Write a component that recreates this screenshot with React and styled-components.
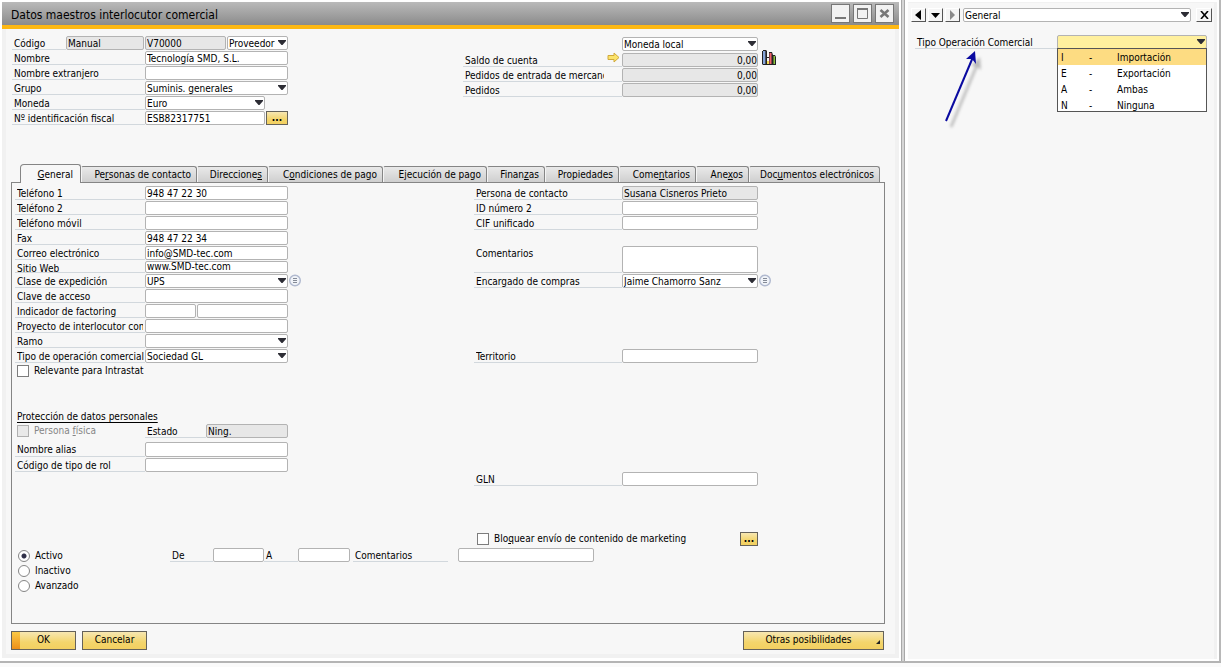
import React, { useId, useState } from "react";
import styled, { createGlobalStyle, css } from "styled-components";

const GlobalStyle = createGlobalStyle`
  *, *::before, *::after { box-sizing: border-box; }
  body { margin: 0; background: #fafafa; }
  body, button, input, select, textarea {
    font-family: "DejaVu Sans Condensed", "DejaVu Sans", Tahoma, sans-serif;
    font-size: 10px;
    color: #000;
  }
`;

/* ---------- shell ---------- */

const Desktop = styled.div`
  display: flex;
  align-items: stretch;
  min-height: calc(100vh - 5px);
  background: #fff;
  border-bottom: 2px solid #b4b4b4;
`;

const MainWindow = styled.main`
  flex: 1;
  min-width: 0;
  display: flex;
  flex-direction: column;
  padding: 2px 2px 3px 2px;
  border: solid #a8a8a8;
  border-width: 0 1px 0 0;
`;

const Divider = styled.div`
  width: 2px;
  flex: none;
  background: #d6d6d6;
`;

const SideWindow = styled.aside`
  width: 317px;
  flex: none;
  display: flex;
  padding: 2px 2px 2px 3px;
  border-left: 1px solid #a8a8a8;
  border-right: 2px solid #b8b8b8;
`;

const SideBody = styled.div`
  flex: 1;
  border-right: 3px solid #f1f1f1;
  border-top: 1px solid #f1f1f1;
  background: #f7f7f7;
  padding: 5px 0 0 3px;
`;

const TitleBar = styled.header`
  display: flex;
  align-items: center;
  height: 27px;
  padding: 0 5px 0 9px;
  background: linear-gradient(#bababa, #8b8b8b);
  border-bottom: 4px solid #fdb813;
  flex: none;
`;

const Title = styled.h1`
  flex: 1;
  margin: 0;
  font-size: 12px;
  font-weight: 400;
  line-height: 20px;
  padding-top: 2px;
`;

const WindowButtons = styled.div`
  display: flex;
  gap: 3px;
`;

const WindowButton = styled.button`
  width: 19px;
  height: 19px;
  padding: 0;
  display: grid;
  place-items: center;
  background: #f2f2f2;
  border: 1px solid #777;
`;

const WindowBody = styled.div`
  flex: 1;
  display: flex;
  flex-direction: column;
  background: #f7f7f7;
  border: solid #f1f1f1;
  border-width: 0 4px 4px 4px;
  padding: 7px 10px 4px 5px;
`;

/* ---------- fields ---------- */

const Row = styled.div`
  display: flex;
  align-items: flex-start;
  height: ${(p) => p.$h || 15}px;
`;

const Label = styled.label`
  width: ${(p) => p.$w || 130}px;
  height: ${(p) => p.$h || 14}px;
  flex: none;
  padding: 0 0 0 2px;
  line-height: 16px;
  white-space: nowrap;
  overflow: hidden;
  border-bottom: 1px solid #d2d8dd;
`;

const LabelClip = styled.span`
  display: block;
  max-width: ${(p) => (p.$clip ? `${p.$clip}px` : "none")};
  overflow: hidden;
`;

const box = css`
  display: block;
  margin: 0;
  width: ${(p) => p.$w || 143}px;
  height: ${(p) => p.$h || 14}px;
  padding: 0 1px;
  line-height: 12px;
  border: 1px solid #b3b3b3;
  border-radius: 2px;
  outline: 0;
  background: ${(p) => (p.$muted ? "#e7e7e7" : p.$active ? "#fff09e" : "#fff")};
  text-align: ${(p) => (p.$right ? "right" : "left")};
`;

const Input = styled.input`
  ${box}
  ${(p) => p.$right && "padding-right: 0;"}
`;

const Area = styled.textarea`
  ${box}
  resize: none;
`;

const SelectWrap = styled.span`
  position: relative;
  display: block;
  flex: none;
`;

const NativeSelect = styled.select`
  ${box}
  appearance: none;
  padding-top: 1px;
`;

const Caret = styled.svg`
  position: absolute;
  right: 2px;
  top: 4px;
  pointer-events: none;
`;

const Gap = styled.div`
  height: ${(p) => p.$h}px;
  flex: none;
`;

const GoldButton = styled.button`
  position: relative;
  width: ${(p) => p.$w}px;
  height: ${(p) => p.$h || 19}px;
  padding: 0 8px 2px;
  line-height: 12px;
  border: 1px solid #65625a;
  background: linear-gradient(#f7e7b2, #f3d56c 60%, #f3d060);
  ${(p) => p.$menu && "padding-right: 18px;"}
  ${(p) =>
    p.$primary &&
    css`
      background: linear-gradient(#fbc945, #ee8f18) 0 0 / 8px 100% no-repeat,
        linear-gradient(#f7e7b2, #f3d56c 60%, #f3d060);
    `}
`;

const DotsButton = styled(GoldButton)`
  width: ${(p) => p.$w}px;
  height: 14px;
  padding: 0 0 1px;
  font-weight: 700;
  line-height: 8px;
`;

const Corner = styled.svg`
  position: absolute;
  right: 3px;
  bottom: 5px;
`;

/* ---------- master header ---------- */

const MasterHeader = styled.section`
  display: flex;
  height: 127px;
`;

const HeaderLeft = styled.div`
  width: 452px;
  padding-left: 1px;
`;

const HeaderRight = styled.div`
  padding-top: 1px;
`;

const CurrencyRow = styled.div`
  padding: 0 0 1px 159px;
`;

const Spaced = styled.div`
  display: flex;
  gap: ${(p) => p.$gap}px;
`;

const LinkArrow = styled.svg`
  width: 13px;
  height: 12px;
  margin-left: -15px;
  margin-top: -1px;
  margin-right: 2px;
  flex: none;
`;

const ChartIcon = styled.svg`
  margin: -3px 0 0 4px;
  flex: none;
`;

const DetailIcon = styled.svg`
  margin-left: 1px;
  flex: none;
`;

/* ---------- tabs ---------- */

const TabList = styled.div`
  display: flex;
  align-items: flex-end;
  padding-left: 9px;
  height: 19px;
`;

const Tab = styled.button`
  width: ${(p) => p.$w}px;
  height: 16px;
  flex: none;
  padding: 1px 5px 0 0;
  text-align: right;
  white-space: nowrap;
  line-height: 12px;
  border: 1px solid #858585;
  border-left-color: #f4f4f4;
  border-bottom: 0;
  border-radius: 2px 3px 0 0;
  background: linear-gradient(#e9e9e9, #cfcfcf);

  &[aria-selected="true"] {
    height: 19px;
    padding-right: 7px;
    padding-top: 2px;
    margin-bottom: -1px;
    border-left-color: #858585;
    border-radius: 4px 3px 0 0;
    background: #f7f7f7;
    z-index: 1;
  }
`;

const Panel = styled.section`
  flex: 1;
  border: 1px solid #858585;
  padding: 3px 0 30px 3px;
`;

const Columns = styled.div`
  display: flex;
`;

const LeftColumn = styled.div`
  width: 459px;
  flex: none;
`;

const RightColumn = styled.div`
  flex: 1;
`;

const Check = styled.label`
  display: flex;
  align-items: center;
  gap: 5px;
  height: 14px;
  width: ${(p) => (p.$w ? `${p.$w}px` : "auto")};
  padding-left: ${(p) => p.$indent || 2}px;
  line-height: 14px;
  white-space: nowrap;
  color: ${(p) => (p.$off ? "#858585" : "#000")};

  input {
    appearance: none;
    width: 12px;
    height: 12px;
    margin: 0;
    flex: none;
    border: 1px solid #7d7d7d;
    background: ${(p) => (p.$off ? "#e9e9e9" : "#fff")};
    border-color: ${(p) => (p.$off ? "#b0b0b0" : "#7d7d7d")};
  }
`;

const Radio = styled.label`
  display: flex;
  align-items: center;
  gap: 5px;
  height: 15px;
  padding-left: 3px;
  line-height: 15px;

  input {
    appearance: none;
    width: 12px;
    height: 12px;
    margin: 0;
    border: 1px solid #858585;
    border-radius: 50%;
    background: #fff;
  }
  input:checked {
    background: radial-gradient(circle, #303048 0 2px, #fff 3px);
  }
`;

const GroupTitle = styled.h2`
  margin: 0 0 0 2px;
  font-size: 10px;
  font-weight: 400;
  line-height: 14px;
  height: 14px;
  text-decoration: underline;
  text-underline-offset: 2px;
`;

const StatusRow = styled.div`
  display: flex;
  align-items: flex-start;
`;

const RadioGroup = styled.div`
  width: 155px;
`;

const Footer = styled.footer`
  display: flex;
  gap: 6px;
  padding: 7px 1px 0 0;
`;

const Spacer = styled.span`
  flex: 1;
`;

/* ---------- side window ---------- */

const SideToolbar = styled.div`
  display: flex;
  align-items: flex-start;
  gap: 2px;
  height: 27px;
  padding-right: 2px;
`;

const NavButton = styled.button`
  width: ${(p) => p.$w || 15}px;
  height: 14px;
  flex: none;
  padding: 0;
  display: grid;
  place-items: center;
  background: #f5f5f5;
  border: solid #fff;
  border-width: 1px;
  border-right-color: #555;
  border-bottom-color: #555;
`;

const SideSelect = styled.div`
  flex: 1;
  margin: 0 3px 0 1px;

  select {
    width: 100%;
  }
`;

const SideField = styled.div`
  position: relative;
  display: flex;
  padding-left: 4px;
`;

const OptionList = styled.ul`
  position: absolute;
  left: 146px;
  top: 13px;
  width: 150px;
  margin: 0;
  padding: 0;
  list-style: none;
  background: #fff;
  border: 1px solid #555;
`;

const Option = styled.li`
  display: grid;
  grid-template-columns: 28px 28px 1fr;
  height: 16px;
  padding-left: 3px;
  line-height: 17px;
  background: ${(p) => (p.$on ? "#fddc82" : "#fff")};

  &:last-child { height: 14px; }
`;

const Pointer = styled.svg`
  position: absolute;
  left: 28px;
  top: 12px;
`;

/* ---------- building blocks ---------- */

function Select({ id, value, label, ...rest }) {
  return (
    <SelectWrap>
      <NativeSelect id={id} aria-label={label} defaultValue={value} {...rest}>
        <option>{value}</option>
      </NativeSelect>
      <Caret width="8" height="5" viewBox="0 0 8 5" aria-hidden="true">
        <path d="M0 0h8v1L4.5 5h-1L0 1z" fill="#2d2d35" />
      </Caret>
    </SelectWrap>
  );
}

function Field({ label, value = "", select, clip, labelWidth, h, after, before, ...rest }) {
  const id = useId();
  return (
    <Row $h={h}>
      <Label htmlFor={id} $w={labelWidth} $h={h ? h - 1 : 14}>
        <LabelClip $clip={clip}>{label}</LabelClip>
      </Label>
      {before}
      {select ? (
        <Select id={id} value={value} {...rest} />
      ) : (
        <Input id={id} defaultValue={value} readOnly={rest.$muted} $h={h ? h - 1 : 14} {...rest} />
      )}
      {after}
    </Row>
  );
}

const Detail = () => (
  <DetailIcon width="13" height="13" viewBox="0 0 13 13" aria-hidden="true">
    <circle cx="6" cy="6.5" r="5.300" fill="#f0f3f8" stroke="#b0b9cf" strokeWidth="1.400" />
    <path d="M4 4.500h4M4 6.500h4M4 8.500h4" stroke="#858b97" strokeWidth="1" />
  </DetailIcon>
);

const Arrow = () => (
  <LinkArrow viewBox="0 0 13 12" aria-hidden="true">
    <path d="M1 3.500h6V1l5 4.500-5 4.500V7.500H1z" fill="#fbe36a" stroke="#d0a93a" />
  </LinkArrow>
);

const Chart = () => (
  <ChartIcon width="15" height="16" viewBox="0 0 15 16" aria-hidden="true">
    <path d="M0 1h1V0h3l1 1v6h2V2h3l1 3h2l1 2v8H1L0 14z" fill="#222" />
    <path d="M1 1h2v13H1z" fill="#86a5da" />
    <path d="M3 1h1v13H3z" fill="#4a5364" />
    <path d="M5 8h2v3H5z" fill="#f4f4f4" />
    <path d="M5 11h2v3H5z" fill="#f3dc55" />
    <path d="M7.500 3H9.500v11H7.500z" fill="#f0606a" />
    <path d="M11.500 6H13v8h-1.500z" fill="#8cc63f" />
  </ChartIcon>
);

const TABS = [
  ["", "G", "eneral", 61],
  ["Pe", "r", "sonas de contacto", 116],
  ["Direccione", "s", "", 71],
  ["C", "o", "ndiciones de pago", 115],
  ["E", "j", "ecución de pago", 104],
  ["Finan", "z", "as", 58],
  ["Propiedades", "", "", 74],
  ["Come", "n", "tarios", 77],
  ["Ane", "x", "os", 53],
  ["Doc", "u", "mentos electrónicos", 131],
];

const OPTIONS = [
  ["I", "Importación"],
  ["E", "Exportación"],
  ["A", "Ambas"],
  ["N", "Ninguna"],
];

function MasterData() {
  return (
    <MasterHeader>
      <HeaderLeft>
        <Row>
          <Label htmlFor="code" $w={54}>Código</Label>
          <Spaced $gap={1}>
            <Input aria-label="Serie" defaultValue="Manual" readOnly $muted $w={78} />
            <Input id="code" defaultValue="V70000" readOnly $muted $w={81} />
            <Select label="Clase" value="Proveedor" $w={61} />
          </Spaced>
        </Row>
        <Field label="Nombre" labelWidth={133} value="Tecnología SMD, S.L." />
        <Field label="Nombre extranjero" labelWidth={133} />
        <Field label="Grupo" labelWidth={133} value="Suminis. generales" select />
        <Field label="Moneda" labelWidth={133} value="Euro" select $w={120} />
        <Field
          label="Nº identificación fiscal"
          labelWidth={133}
          value="ESB82317751"
          $w={120}
          after={
            <Spaced $gap={1}>
              <span />
              <DotsButton $w={22} aria-label="Más identificaciones">...</DotsButton>
            </Spaced>
          }
        />
      </HeaderLeft>
      <HeaderRight>
        <CurrencyRow>
          <Row>
            <Select label="Vista de moneda" value="Moneda local" $w={136} />
          </Row>
        </CurrencyRow>
        <Field label="Saldo de cuenta" labelWidth={159} value="0,00" $w={136} $muted $right before={<Arrow />} after={<Chart />} />
        <Field label="Pedidos de entrada de mercancías" clip={139} labelWidth={159} value="0,00" $w={136} $muted $right />
        <Field label="Pedidos" labelWidth={159} value="0,00" $w={136} $muted $right />
      </HeaderRight>
    </MasterHeader>
  );
}

function GeneralPanel() {
  const [status, setStatus] = useState("Activo");
  return (
    <Panel role="tabpanel" aria-label="General">
      <Columns>
        <LeftColumn>
          <Field label="Teléfono 1" value="948 47 22 30" />
          <Field label="Teléfono 2" />
          <Field label="Teléfono móvil" />
          <Field label="Fax" value="948 47 22 34" />
          <Field label="Correo electrónico" value="info@SMD-tec.com" />
          <Field label="Sitio Web" value="www.SMD-tec.com" h={13} />
          <Field label="Clase de expedición" value="UPS" select after={<Detail />} />
          <Field label="Clave de acceso" />
          <Row>
            <Label htmlFor="factoring">Indicador de factoring</Label>
            <Spaced $gap={1}>
              <Input id="factoring" $w={51} />
              <Input aria-label="Descripción de factoring" $w={91} />
            </Spaced>
          </Row>
          <Field label="Proyecto de interlocutor comercial" clip={126} />
          <Field label="Ramo" select />
          <Field label="Tipo de operación comercial" value="Sociedad GL" select />
          <Check>
            <input type="checkbox" />
            Relevante para Intrastat
          </Check>
          <Gap $h={32} />
          <GroupTitle>Protección de datos personales</GroupTitle>
          <Row $h={18}>
            <Check $off $w={130}>
              <input type="checkbox" disabled />
              <span>Persona <u>f</u>ísica</span>
            </Check>
            <Label htmlFor="estado" $w={61}>Estado</Label>
            <Input id="estado" defaultValue="Ning." readOnly $muted $w={82} />
          </Row>
          <Field label="Nombre alias" h={16} />
          <Field label="Código de tipo de rol" />
        </LeftColumn>
        <RightColumn>
          <Field label="Persona de contacto" labelWidth={148} value="Susana Cisneros Prieto" $w={136} $muted />
          <Field label="ID número 2" labelWidth={148} $w={136} />
          <Field label="CIF unificado" labelWidth={148} $w={136} />
          <Gap $h={15} />
          <Row $h={28}>
            <Label htmlFor="notes" $w={148} $h={27}>Comentarios</Label>
            <Area id="notes" $w={136} $h={27} />
          </Row>
          <Field label="Encargado de compras" labelWidth={148} value="Jaime Chamorro Sanz" select $w={136} after={<Detail />} />
          <Gap $h={60} />
          <Field label="Territorio" labelWidth={148} $w={136} />
          <Gap $h={108} />
          <Field label="GLN" labelWidth={148} $w={136} />
          <Gap $h={45} />
          <Row $h={16}>
            <Check $w={266} $indent={3}>
              <input type="checkbox" />
              <span>Blo<u>q</u>uear envío de contenido de marketing</span>
            </Check>
            <DotsButton $w={18} aria-label="Opciones de marketing">...</DotsButton>
          </Row>
        </RightColumn>
      </Columns>
      <StatusRow>
        <RadioGroup role="radiogroup" aria-label="Estado del interlocutor">
          {["Activo", "Inactivo", "Avanzado"].map((s) => (
            <Radio key={s}>
              <input type="radio" name="status" checked={status === s} onChange={() => setStatus(s)} />
              {s}
            </Radio>
          ))}
        </RadioGroup>
        <Label htmlFor="from" $w={43}>De</Label>
        <Input id="from" $w={51} />
        <Label htmlFor="to" $w={34}>A</Label>
        <Input id="to" $w={52} />
        <Spaced $gap={10}>
          <Spaced $gap={3}>
            <span />
            <Label htmlFor="statusNotes" $w={95}>Comentarios</Label>
          </Spaced>
          <Input id="statusNotes" $w={136} />
        </Spaced>
      </StatusRow>
    </Panel>
  );
}

export default function App() {
  return (
    <>
      <GlobalStyle />
      <Desktop>
        <MainWindow>
          <TitleBar>
            <Title>Datos maestros interlocutor comercial</Title>
            <WindowButtons>
              <WindowButton aria-label="Minimizar">
                <svg width="13" height="13" viewBox="0 0 13 13"><path d="M1 11h11" stroke="#777" strokeWidth="2" /></svg>
              </WindowButton>
              <WindowButton aria-label="Maximizar">
                <svg width="13" height="13" viewBox="0 0 13 13"><path d="M1.500 2.500h10v9h-10z" fill="none" stroke="#777" /><path d="M1 2h11" stroke="#777" strokeWidth="2" /></svg>
              </WindowButton>
              <WindowButton aria-label="Cerrar">
                <svg width="13" height="13" viewBox="0 0 13 13"><path d="M2.500 3l8 7M10.500 3l-8 7" stroke="#777" strokeWidth="2.600" /></svg>
              </WindowButton>
            </WindowButtons>
          </TitleBar>
          <WindowBody>
            <MasterData />
            <TabList role="tablist">
              {TABS.map(([a, key, b, w], i) => (
                <Tab key={a + key} role="tab" aria-selected={i === 0} $w={w}>
                  {a}{key && <u>{key}</u>}{b}
                </Tab>
              ))}
            </TabList>
            <GeneralPanel />
            <Footer>
              <GoldButton $w={65} $primary>OK</GoldButton>
              <GoldButton $w={65}>Cancelar</GoldButton>
              <Spacer />
              <GoldButton $w={141} $menu>
                Otras posibilidades
                <Corner width="4" height="4" viewBox="0 0 4 4" aria-hidden="true"><path d="M4 0v4H0z" fill="#222" /></Corner>
              </GoldButton>
            </Footer>
          </WindowBody>
        </MainWindow>
        <Divider />
        <SideWindow>
          <SideBody>
            <SideToolbar>
              <NavButton aria-label="Anterior">
                <svg width="9" height="10" viewBox="0 0 9 10"><path d="M7 0v10L1 5z" /></svg>
              </NavButton>
              <NavButton aria-label="Lista">
                <svg width="9" height="10" viewBox="0 0 9 10"><path d="M0 3h9L4.500 8z" /></svg>
              </NavButton>
              <NavButton aria-label="Siguiente">
                <svg width="9" height="10" viewBox="0 0 9 10"><path d="M2 0v10l5-5z" fill="#8a8a8a" /></svg>
              </NavButton>
              <SideSelect>
                <Select label="Categoría" value="General" />
              </SideSelect>
              <NavButton aria-label="Cerrar panel" $w={16}>
                <svg width="9" height="8" viewBox="0 0 9 8"><path d="M1 0l7 8M8 0L1 8" stroke="#000" strokeWidth="1.600" /></svg>
              </NavButton>
            </SideToolbar>
            <SideField>
              <Label htmlFor="operation" $w={142}>Tipo Operación Comercial</Label>
              <Select id="operation" value="" $w={150} $active />
              <OptionList role="listbox" aria-label="Tipo Operación Comercial">
                {OPTIONS.map(([code, name], i) => (
                  <Option key={code} role="option" aria-selected={i === 0} $on={i === 0}>
                    <span>{code}</span>
                    <span>-</span>
                    <span>{name}</span>
                  </Option>
                ))}
              </OptionList>
              <Pointer width="50" height="84" viewBox="0 0 50 84" aria-hidden="true">
                <defs>
                  <filter id="soft" x="-20%" y="-20%" width="140%" height="140%">
                    <feGaussianBlur stdDeviation="1.500" />
                  </filter>
                </defs>
                <g filter="url(#soft)" opacity="0.350" transform="translate(5 6)">
                  <path d="M7 74L33 12" stroke="#444" strokeWidth="2.500" />
                  <path d="M36 4L27 13l5 0 5 4z" fill="#444" />
                </g>
                <path d="M7 74L34 10" stroke="#0a0aa0" strokeWidth="2" />
                <path d="M36 4L27 12l6 0 4 5z" fill="#0a0aa0" />
              </Pointer>
            </SideField>
          </SideBody>
        </SideWindow>
      </Desktop>
    </>
  );
}
